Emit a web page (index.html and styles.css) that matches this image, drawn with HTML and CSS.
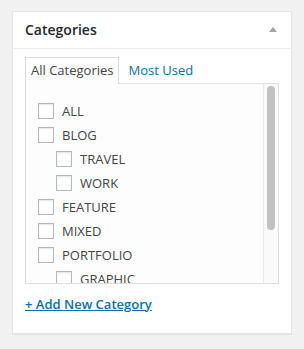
FILE: index.html
```html
<!DOCTYPE html>
<html lang="en">
<head>
    <meta charset="UTF-8">
    <meta name="viewport" content="width=device-width, initial-scale=1.0">
    <title>Categories</title>
    <link rel="stylesheet" href="styles.css">
</head>
<body>
    <div class="postbox">
        <div class="postbox-header">
            <h2>Categories</h2>
            <span class="toggle-arrow"></span>
        </div>
        <div class="inside">
            <ul class="category-tabs">
                <li class="tab active">All Categories</li>
                <li class="tab"><a href="#">Most Used</a></li>
            </ul>
            <div class="tabs-panel">
                <ul class="checklist">
                    <li><label><input type="checkbox"> ALL</label></li>
                    <li><label><input type="checkbox"> BLOG</label>
                        <ul class="children">
                            <li><label><input type="checkbox"> TRAVEL</label></li>
                            <li><label><input type="checkbox"> WORK</label></li>
                        </ul>
                    </li>
                    <li><label><input type="checkbox"> FEATURE</label></li>
                    <li><label><input type="checkbox"> MIXED</label></li>
                    <li><label><input type="checkbox"> PORTFOLIO</label>
                        <ul class="children">
                            <li><label><input type="checkbox"> GRAPHIC</label></li>
                        </ul>
                    </li>
                </ul>
                <div class="scrollbar"><div class="thumb"></div></div>
            </div>
            <h4 class="adder"><a href="#">+ Add New Category</a></h4>
        </div>
    </div>
</body>
</html>
```

FILE: styles.css
```css
body {
    margin: 0;
    padding: 11px 12px;
    background: #f1f1f1;
    font-family: "Open Sans", "Liberation Sans", sans-serif;
    font-size: 13px;
    color: #444;
}
.postbox {
    width: 278px;
    background: #fff;
    border: 1px solid #e5e5e5;
    box-shadow: 0 1px 1px rgba(0, 0, 0, 0.04);
}
.postbox-header {
    display: flex;
    align-items: center;
    justify-content: space-between;
    border-bottom: 1px solid #eee;
    padding: 8px 12px;
}
.postbox-header h2 {
    margin: 0;
    font-size: 14px;
    font-weight: 600;
    line-height: 1.4;
    color: #23282d;
}
.toggle-arrow {
    width: 0;
    height: 0;
    border-left: 4px solid transparent;
    border-right: 4px solid transparent;
    border-bottom: 5px solid #a0a5aa;
    margin-right: 2px;
}
.inside {
    padding: 8px 12px 12px;
}
.category-tabs {
    display: flex;
    gap: 3px;
    list-style: none;
    margin: 0 0 -1px;
    padding: 0;
    position: relative;
    z-index: 1;
}
.tab {
    padding: 3px 5px 5px;
    line-height: 18px;
    border: 1px solid transparent;
    border-bottom: none;
}
.tab.active {
    border-color: #ddd;
    background: #fdfdfd;
}
.tab a {
    color: #0073aa;
    text-decoration: none;
}
.tabs-panel {
    position: relative;
    height: 199px;
    overflow: hidden;
    border: 1px solid #ddd;
    background: #fdfdfd;
    padding: 0 12px;
}
.scrollbar {
    position: absolute;
    top: 0;
    right: 0;
    bottom: 0;
    width: 14px;
    background: #fafafa;
    border-left: 1px solid #e8e8e8;
}
.thumb {
    margin: 2px 0 0 3px;
    width: 8px;
    height: 144px;
    border-radius: 4px;
    background: #c1c1c1;
}
.checklist {
    list-style: none;
    margin: 0;
    padding: 15px 0 0;
}
.checklist ul {
    list-style: none;
    margin: 0;
    padding: 0 0 0 18px;
}
.checklist label {
    display: flex;
    align-items: center;
    height: 24px;
    white-space: nowrap;
}
.checklist input {
    -webkit-appearance: none;
    appearance: none;
    width: 16px;
    height: 16px;
    margin: 0 8px 0 0;
    border: 1px solid #b4b9be;
    background: #fff;
    box-shadow: inset 0 1px 2px rgba(0, 0, 0, 0.1);
}
.adder {
    margin: 11px 0 8px;
    font-size: 13px;
    font-weight: 600;
    line-height: 18px;
}
.adder a {
    color: #0073aa;
    text-decoration: underline;
}
```
